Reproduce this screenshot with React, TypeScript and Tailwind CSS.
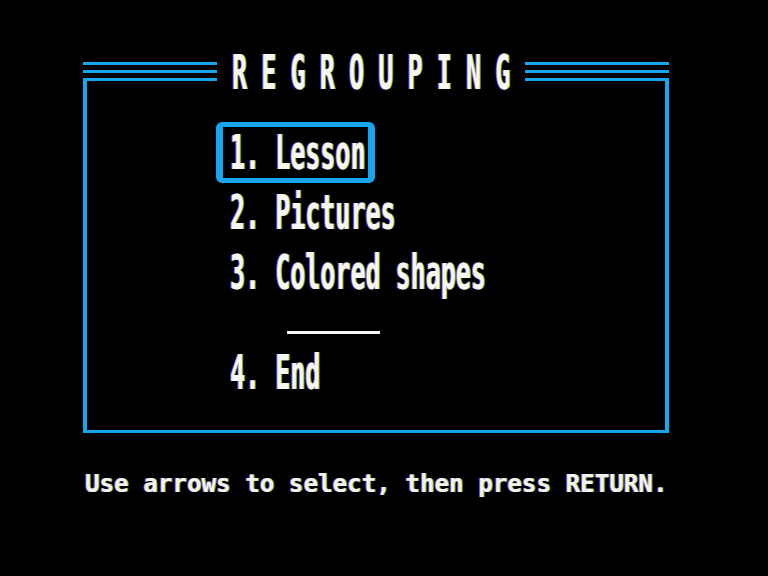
import React from 'react';

const BLUE = 'bg-[#16a6ee]';

// three stacked rules on either side of the title
const Rules: React.FC<{ className?: string }> = ({ className = '' }) => (
  <div className={`flex flex-col gap-[5px] ${className}`}>
    <div className={`h-[3px] ${BLUE}`} />
    <div className={`h-[3px] ${BLUE}`} />
    <div className={`h-[3px] ${BLUE}`} />
  </div>
);

const items = ['1. Lesson', '2. Pictures', '3. Colored shapes', '4. End'];

const MenuRow: React.FC<{ label: string; selected?: boolean }> = ({ label, selected }) => (
  <div className="h-[60px]">
    <div
      className={`inline-flex items-start h-[61px] border-x-[7px] border-y-[5px] rounded-[6px] pl-[7px] pr-[3px] pt-[2px] ${
        selected ? 'border-[#16a6ee]' : 'border-transparent'
      }`}
    >
      <span className="inline-block origin-top scale-y-[1.92] text-[25px] leading-[25px] font-bold text-[#f6f6f2] whitespace-pre [text-shadow:-1px_0_rgba(190,90,255,0.75),1px_0_rgba(130,255,70,0.7)]">
        {label}
      </span>
    </div>
  </div>
);

const App: React.FC = () => {
  const [selected] = React.useState(0);

  return (
    <div className="w-[768px] h-[576px] bg-black overflow-hidden font-['DejaVu_Sans_Mono','Liberation_Mono',monospace]">
      <div className="pt-[62px] pl-[83px] w-[669px]">
        {/* title bar */}
        <div className="flex items-start h-[19px]">
          <Rules className="w-[134px]" />
          <div className="w-[308px] -mt-[13px] pl-[15px]">
            <span className="inline-block origin-top scale-y-[1.92] text-[25px] leading-[25px] font-bold tracking-[14.2px] text-[#f6f6f2] whitespace-pre [text-shadow:-1px_0_rgba(190,90,255,0.75),1px_0_rgba(130,255,70,0.7)]">
              REGROUPING
            </span>
          </div>
          <Rules className="flex-1" />
        </div>

        {/* menu frame */}
        <div className="h-[352px] border-x-4 border-b-[3px] border-[#16a6ee] pt-[41px] pl-[129px]">
          <MenuRow label={items[0]} selected={selected === 0} />
          <MenuRow label={items[1]} selected={selected === 1} />
          <MenuRow label={items[2]} selected={selected === 2} />
          <div className="h-[40px] pt-[29px] pl-[71px]">
            <div className="w-[93px] h-[3px] bg-[#f6f6f2]" />
          </div>
          <MenuRow label={items[3]} selected={selected === 3} />
        </div>

        <div className="mt-[39px] ml-[2px] text-[24.2px] leading-[24px] font-bold text-[#f2f2ee] whitespace-pre [text-shadow:-1px_0_rgba(190,90,255,0.7),1px_0_rgba(130,255,70,0.65)]">
          Use arrows to select, then press RETURN.
        </div>
      </div>
    </div>
  );
};

export default App;
